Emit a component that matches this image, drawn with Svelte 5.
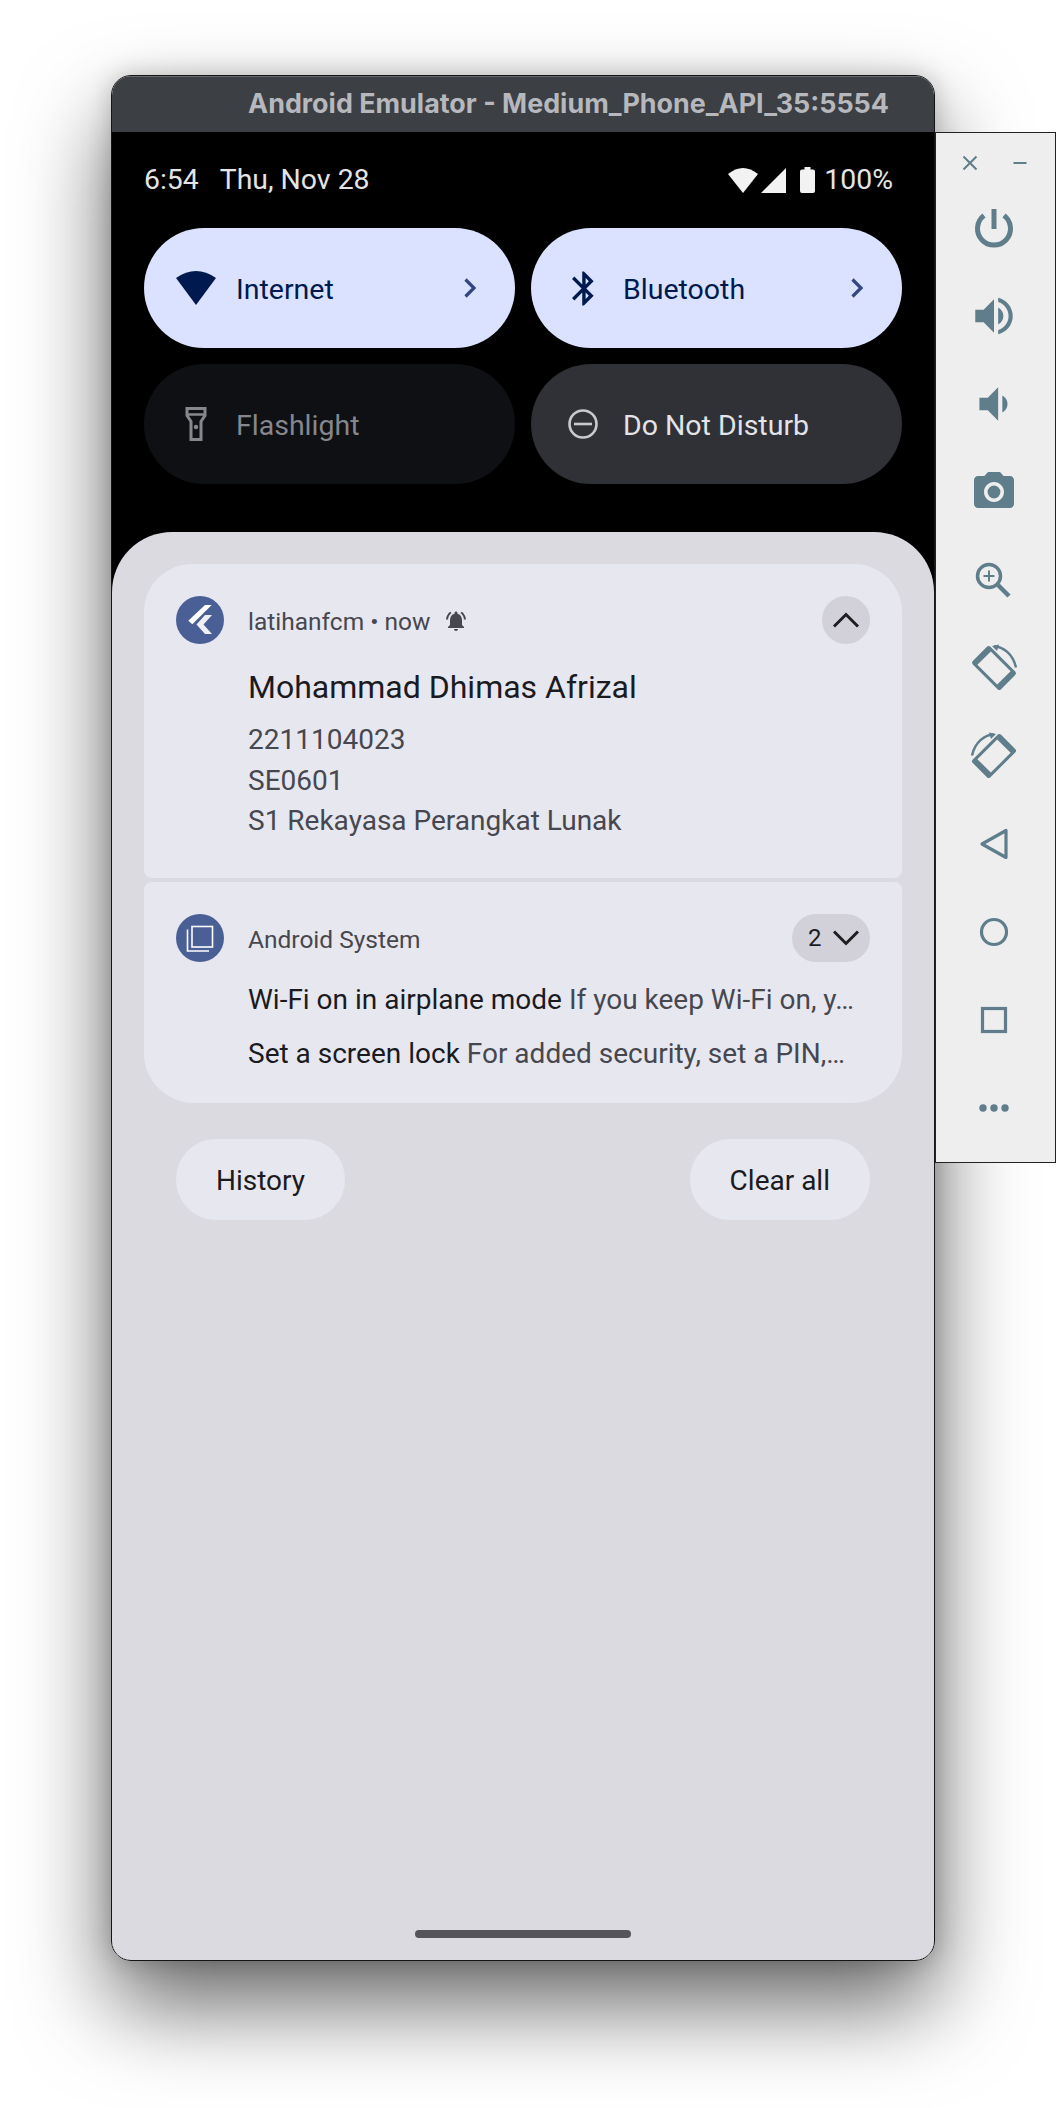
<script>
    const notes = [
        { title: "Wi-Fi on in airplane mode", text: "If you keep Wi-Fi on, y…" },
        { title: "Set a screen lock", text: "For added security, set a PIN,…" }
    ];
    const lines = ["2211104023", "SE0601", "S1 Rekayasa Perangkat Lunak"];
</script>

<div class="page">
    <div class="window">
        <div class="titlebar">Android Emulator - Medium_Phone_API_35:5554</div>
        <div class="screen">
            <div class="status">
                <span class="time">6:54</span>
                <span class="date">Thu, Nov 28</span>
                <span class="status-icons">
                    <svg width="30" height="25" viewBox="0 0 30 25"><path d="M0 6Q15 -6 30 6L15 25Z" fill="#f2f2f2"/></svg>
                    <svg width="25" height="25" viewBox="0 0 25 25"><path d="M25 0V25H0Z" fill="#f2f2f2"/></svg>
                    <svg class="batt" width="15" height="26" viewBox="0 0 15 26"><path d="M4.5 0h6v2.5H13a2 2 0 0 1 2 2V24a2 2 0 0 1-2 2H2a2 2 0 0 1-2-2V4.500a2 2 0 0 1 2-2h2.500z" fill="#f2f2f2"/></svg>
                </span>
                <span class="pct">100%</span>
            </div>

            <div class="tiles">
                <div class="tile on">
                    <svg class="tile-icon" width="40" height="34" viewBox="0 0 40 34"><path d="M0 7Q20 -7 40 7L20 34Z" fill="#001a4f"/></svg>
                    <span class="tile-label">Internet</span>
                    <svg class="more" width="14" height="22" viewBox="0 0 14 22"><path d="M2.500 2.500L11 11L2.500 19.500" fill="none" stroke="#34467f" stroke-width="3.200"/></svg>
                </div>
                <div class="tile on">
                    <svg class="tile-icon" width="40" height="41" viewBox="0 0 23.500 24"><path transform="translate(0.300 0)" d="M17.710 7.710L12 2h-1v7.590L6.410 5 5 6.410 10.590 12 5 17.590 6.410 19 11 14.410V22h1l5.710-5.710-4.300-4.290 4.300-4.290zM13 5.830l1.880 1.880L13 9.590V5.830zm1.880 10.460L13 18.170v-3.760l1.880 1.880z" fill="#001a4f"/></svg>
                    <span class="tile-label">Bluetooth</span>
                    <svg class="more" width="14" height="22" viewBox="0 0 14 22"><path d="M2.500 2.500L11 11L2.500 19.500" fill="none" stroke="#34467f" stroke-width="3.200"/></svg>
                </div>
                <div class="tile off">
                    <svg class="tile-icon" width="40" height="34" viewBox="-9.500 0 40 34">
                        <path d="M1.500 1.500H19.500V8.500L15.500 14.500V32.500H5.500V14.500L1.500 8.500Z" fill="none" stroke="#86888e" stroke-width="3"/>
                        <path d="M1.500 7.500H19.500" stroke="#86888e" stroke-width="2.500"/>
                        <circle cx="10.500" cy="20" r="2.200" fill="#86888e"/>
                    </svg>
                    <span class="tile-label">Flashlight</span>
                </div>
                <div class="tile dnd">
                    <svg class="tile-icon" width="40" height="34" viewBox="0 0 40 34">
                        <circle cx="20" cy="17" r="13.500" fill="none" stroke="#c9cad0" stroke-width="2.600"/>
                        <path d="M11 17H29" stroke="#c9cad0" stroke-width="2.600"/>
                    </svg>
                    <span class="tile-label">Do Not Disturb</span>
                </div>
            </div>

            <div class="panel">
                <div class="card first">
                    <div class="head">
                        <div class="app-icon">
                            <svg width="48" height="48" viewBox="0 0 48 48">
                                <path d="M29 9H35.700L16.300 28.300L12.300 24.700Z" fill="#fff"/>
                                <path d="M29 19H36L27.500 28.500L36 38H29L20.500 28.500Z" fill="#eef0f6"/>
                            </svg>
                        </div>
                        <span class="app-name">latihanfcm • now</span>
                        <svg class="bell" width="24" height="24" viewBox="0 0 24 24"><path d="M7.580 4.080L6.150 2.650C3.750 4.480 2.170 7.300 2.030 10.500h2c.15-2.650 1.510-4.970 3.550-6.420zm12.390 6.420h2c-.15-3.200-1.730-6.020-4.120-7.850l-1.420 1.430c2.020 1.450 3.390 3.770 3.540 6.420zM18 11c0-3.070-1.640-5.640-4.500-6.320V4c0-.83-.67-1.500-1.500-1.500s-1.500.67-1.500 1.500v.68C7.630 5.360 6 7.920 6 11v5l-2 2v1h16v-1l-2-2v-5zm-6 11c.14 0 .27-.01.4-.04.65-.14 1.180-.58 1.440-1.180.1-.24.15-.5.15-.78h-4c.01 1.100.9 2 2.010 2z" fill="#47474f"/></svg>
                        <div class="collapse">
                            <svg width="28" height="18" viewBox="0 0 28 18"><path d="M2 15.500L14 3.500L26 15.500" fill="none" stroke="#1e1e22" stroke-width="3"/></svg>
                        </div>
                    </div>
                    <div class="title">Mohammad Dhimas Afrizal</div>
                    <div class="body">
                        {#each lines as line}
                            <div>{line}</div>
                        {/each}
                    </div>
                </div>

                <div class="card second">
                    <div class="head">
                        <div class="app-icon">
                            <svg width="48" height="48" viewBox="0 0 48 48" fill="none" stroke="#fff" stroke-width="1.600">
                                <rect x="16" y="12.500" width="20.500" height="20.500"/>
                                <path d="M11.500 15.500V37H33"/>
                            </svg>
                        </div>
                        <span class="app-name">Android System</span>
                        <div class="count">
                            <span>2</span>
                            <svg width="28" height="18" viewBox="0 0 28 18"><path d="M2 2.500L14 14.500L26 2.500" fill="none" stroke="#1e1e22" stroke-width="3"/></svg>
                        </div>
                    </div>
                    <div class="rows">
                        {#each notes as note}
                            <div class="row"><b>{note.title}</b> <span>{note.text}</span></div>
                        {/each}
                    </div>
                </div>

                <div class="actions">
                    <div class="pill">History</div>
                    <div class="pill">Clear all</div>
                </div>

                <div class="home-bar"></div>
            </div>
        </div>
    </div>

    <div class="sidebar">
        <div class="win-buttons">
            <svg width="16" height="16" viewBox="0 0 16 16"><path d="M1.500 1.500L14.500 14.500M14.500 1.500L1.500 14.500" stroke="#607d8b" stroke-width="2"/></svg>
            <svg width="16" height="16" viewBox="0 0 16 16"><path d="M1.500 8H14.500" stroke="#607d8b" stroke-width="2"/></svg>
        </div>
        <div class="tool">
            <svg width="40" height="40" viewBox="0 0 40 40" fill="none" stroke="#607d8b" stroke-width="5"><path d="M20 1V21"/><path d="M10 7.500A16.500 16.500 0 1 0 30 7.500"/></svg>
        </div>
        <div class="tool">
            <svg width="50" height="50" viewBox="0 0 24 24"><path d="M3 9v6h4l5 5V4L7 9H3zm13.500 3c0-1.770-1.020-3.290-2.500-4.030v8.050c1.480-.73 2.500-2.250 2.500-4.020zM14 3.230v2.060c2.890.86 5 3.540 5 6.710s-2.110 5.850-5 6.710v2.060c4.010-.91 7-4.490 7-8.770s-2.990-7.860-7-8.770z" fill="#607d8b"/></svg>
        </div>
        <div class="tool">
            <svg width="50" height="50" viewBox="0 0 24 24"><path d="M18.500 12c0-1.770-1.020-3.290-2.500-4.030v8.050c1.480-.73 2.500-2.250 2.500-4.020zM5 9v6h4l5 5V4L9 9H5z" fill="#607d8b"/></svg>
        </div>
        <div class="tool">
            <svg width="48" height="48" viewBox="0 0 24 24"><path fill-rule="evenodd" d="M9 2L7.170 4H4c-1.100 0-2 .9-2 2v12c0 1.100.9 2 2 2h16c1.100 0 2-.9 2-2V6c0-1.100-.9-2-2-2h-3.170L15 2H9zm3 15c-2.760 0-5-2.240-5-5s2.240-5 5-5 5 2.240 5 5-2.240 5-5 5z" fill="#607d8b"/><circle cx="12" cy="12" r="3.200" fill="#607d8b"/></svg>
        </div>
        <div class="tool">
            <svg width="40" height="40" viewBox="0 0 40 40" fill="none" stroke="#607d8b">
                <circle cx="15" cy="16" r="11.500" stroke-width="3.500"/>
                <path d="M24 25L35 36" stroke-width="4.500"/>
                <path d="M15 10.500V21.500M9.500 16H20.500" stroke-width="2"/>
            </svg>
        </div>
        <div class="tool">
            <svg width="48" height="48" viewBox="0 0 48 48">
                <g transform="translate(24 24) rotate(45)">
                    <rect x="-20" y="-12.500" width="40" height="25" rx="2.500" fill="#607d8b"/>
                    <rect x="-14" y="-9.500" width="28" height="19" fill="#eee"/>
                </g>
                <path d="M24 2.500C33 2.500 43 10 46 23.500" fill="none" stroke="#607d8b" stroke-width="2.500"/>
                <path d="M22 2L29 .5L27 7Z" fill="#607d8b"/>
            </svg>
        </div>
        <div class="tool">
            <svg class="flip" width="48" height="48" viewBox="0 0 48 48">
                <g transform="translate(24 24) rotate(45)">
                    <rect x="-20" y="-12.500" width="40" height="25" rx="2.500" fill="#607d8b"/>
                    <rect x="-14" y="-9.500" width="28" height="19" fill="#eee"/>
                </g>
                <path d="M24 2.500C33 2.500 43 10 46 23.500" fill="none" stroke="#607d8b" stroke-width="2.500"/>
                <path d="M22 2L29 .5L27 7Z" fill="#607d8b"/>
            </svg>
        </div>
        <div class="tool">
            <svg width="32" height="34" viewBox="0 0 32 34"><path d="M4 17L28 3.500V30.500Z" fill="none" stroke="#607d8b" stroke-width="3.200" stroke-linejoin="round"/></svg>
        </div>
        <div class="tool">
            <svg width="32" height="32" viewBox="0 0 32 32"><circle cx="16" cy="16" r="12.500" fill="none" stroke="#607d8b" stroke-width="3.200"/></svg>
        </div>
        <div class="tool">
            <svg width="32" height="32" viewBox="0 0 32 32"><rect x="4.500" y="4.500" width="23" height="23" fill="none" stroke="#607d8b" stroke-width="3.200"/></svg>
        </div>
        <div class="tool">
            <svg width="36" height="10" viewBox="0 0 36 10" fill="#607d8b"><circle cx="7" cy="5" r="3.700"/><circle cx="18" cy="5" r="3.700"/><circle cx="29" cy="5" r="3.700"/></svg>
        </div>
    </div>
</div>

<style>
    :global(body) {
        background: #fff;
    }
    .page {
        display: flex;
        align-items: flex-start;
        width: 1056px;
        height: 2108px;
        padding: 75px 0 0 111px;
        box-sizing: border-box;
        overflow: hidden;
        background: #fff;
        font-family: Roboto, "Noto Sans", sans-serif;
    }

    .window {
        width: 824px;
        height: 1886px;
        flex: none;
        box-sizing: border-box;
        display: flex;
        flex-direction: column;
        border: 1px solid #151515;
        border-radius: 20px;
        overflow: hidden;
        box-shadow: 0 44px 90px rgba(0, 0, 0, 0.6), 0 0 24px rgba(0, 0, 0, 0.2);
    }
    .titlebar {
        height: 56px;
        flex: none;
        box-sizing: border-box;
        padding-right: 45px;
        text-align: right;
        line-height: 53px;
        background: #3c3f43;
        border-top: 1px solid #66696d;
        color: #b6b8bd;
        font-family: Inter, "Liberation Sans", sans-serif;
        font-weight: 700;
        font-size: 26.900px;
        white-space: nowrap;
    }
    .screen {
        flex: 1;
        display: flex;
        flex-direction: column;
        background: #000;
        min-height: 0;
    }

    .status {
        height: 96px;
        flex: none;
        display: flex;
        align-items: center;
        padding: 0 41px 0 32px;
        color: #e4e4e4;
        font-size: 28.400px;
    }
    .time,
    .date,
    .pct {
        margin-bottom: 2px;
    }
    .date {
        margin-left: 21px;
    }
    .status-icons {
        margin-left: auto;
        display: flex;
        align-items: center;
        gap: 3px;
    }
    .batt {
        margin-left: 11px;
    }
    .pct {
        margin-left: 9px;
    }

    .tiles {
        display: grid;
        grid-template-columns: 371px 371px;
        grid-auto-rows: 120px;
        gap: 16px;
        padding: 0 32px;
        margin-bottom: 48px;
    }
    .tile {
        display: flex;
        align-items: center;
        padding: 0 38px 0 32px;
        border-radius: 60px;
        font-size: 28.500px;
    }
    .tile-icon {
        flex: none;
        margin-right: 20px;
    }
    .tile-label {
        padding-top: 2px;
    }
    .more {
        margin-left: auto;
    }
    .tile.on {
        background: #dae2ff;
        color: #001a4f;
    }
    .tile.off {
        background: #0e1014;
        color: #85878d;
    }
    .tile.dnd {
        background: #2f3136;
        color: #e3e3e8;
    }

    .panel {
        flex: 1;
        display: flex;
        flex-direction: column;
        padding: 32px 32px 0;
        background: #dadae0;
        border-radius: 60px 60px 0 0;
    }
    .card {
        background: #e7e7f0;
        padding: 32px 32px 0;
    }
    .card.first {
        height: 314px;
        box-sizing: border-box;
        border-radius: 48px 48px 8px 8px;
        margin-bottom: 4px;
    }
    .card.second {
        height: 221px;
        box-sizing: border-box;
        border-radius: 8px 8px 50px 50px;
    }
    .head {
        display: flex;
        align-items: center;
        height: 48px;
    }
    .app-icon {
        width: 48px;
        height: 48px;
        flex: none;
        border-radius: 50%;
        background: #4a5f96;
        margin-right: 24px;
    }
    .app-icon svg {
        display: block;
    }
    .app-name {
        padding-top: 2px;
        color: #47474f;
        font-size: 24.500px;
    }
    .bell {
        margin-left: 14px;
        margin-top: 2px;
    }
    .collapse {
        margin-left: auto;
        width: 48px;
        height: 48px;
        border-radius: 50%;
        background: #d2d1d9;
        display: flex;
        align-items: center;
        justify-content: center;
    }
    .title {
        margin: 21px 0 0 72px;
        line-height: 44px;
        font-size: 32px;
        color: #1b1b1f;
    }
    .body {
        margin: 11px 0 0 72px;
        font-size: 28px;
        line-height: 40.500px;
        color: #47474f;
    }
    .count {
        margin-left: auto;
        width: 78px;
        height: 48px;
        box-sizing: border-box;
        padding-left: 16px;
        border-radius: 24px;
        background: #d2d1d9;
        display: flex;
        align-items: center;
        gap: 10px;
        color: #1b1b1f;
        font-size: 24px;
    }
    .rows {
        margin: 11px 0 0 72px;
    }
    .row {
        line-height: 54px;
        font-size: 28px;
        white-space: nowrap;
        color: #47474f;
    }
    .row b {
        font-weight: 400;
        color: #1b1b1f;
    }

    .actions {
        display: flex;
        justify-content: space-between;
        padding: 0 32px;
        margin-top: 36px;
    }
    .pill {
        height: 81px;
        box-sizing: border-box;
        padding: 2px 40px 0;
        display: flex;
        align-items: center;
        border-radius: 40px;
        background: #e7e7f0;
        color: #1b1b1f;
        font-size: 28px;
    }

    .home-bar {
        width: 216px;
        height: 8px;
        margin: auto auto 22px;
        border-radius: 4px;
        background: #555559;
    }

    .sidebar {
        position: relative;
        width: 121px;
        height: 1031px;
        flex: none;
        margin-top: 57px;
        box-sizing: border-box;
        border: 1px solid #222;
        background: #eee;
    }
    .win-buttons {
        height: 51px;
        display: flex;
        align-items: center;
        justify-content: space-between;
        padding: 9px 27px 0 26px;
        box-sizing: border-box;
    }
    .tool {
        height: 88px;
        padding-right: 3px;
        display: flex;
        align-items: center;
        justify-content: center;
    }
    .flip {
        transform: scaleX(-1);
    }
</style>
